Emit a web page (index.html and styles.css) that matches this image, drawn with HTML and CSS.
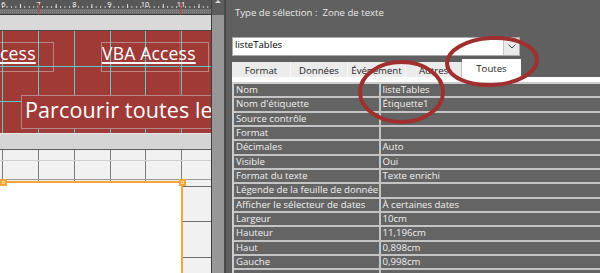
FILE: index.html
```html
<!DOCTYPE html>
<html lang="fr">
<head>
<meta charset="utf-8">
<title>Feuille de propriétés</title>
<link rel="stylesheet" href="styles.css">
</head>
<body>
<div class="screen">
  <div class="designer">
    <svg class="ruler" width="211" height="15" viewBox="0 0 211 15">
      <defs>
        <pattern id="rdots" width="2" height="2" patternUnits="userSpaceOnUse"><rect width="2" height="2" fill="#6f6f6f"/><rect width="1" height="1" fill="#8c8c8c"/></pattern>
        <pattern id="rtick" x="2" width="4.4625" height="15" patternUnits="userSpaceOnUse"><rect x="0" y="6" width="1" height="2" fill="#c8c8c8"/></pattern>
        <pattern id="rhalf" x="20" width="35.7" height="15" patternUnits="userSpaceOnUse"><rect x="0" y="4" width="1" height="4" fill="#e0e0e0"/></pattern>
      </defs>
      <rect width="211" height="9" fill="#575757"/>
      <rect y="9" width="211" height="5" fill="url(#rdots)"/>
      <rect y="14" width="211" height="1" fill="#3a3a3a"/>
      <rect width="211" height="9" fill="url(#rtick)"/>
      <rect width="211" height="9" fill="url(#rhalf)"/>
      <g class="rnum" fill="#ffffff" font-size="7.5" text-anchor="middle">
        <text x="3.5" y="7">6</text>
        <text x="38.5" y="7">7</text>
        <text x="74.5" y="7">8</text>
        <text x="109.5" y="7">9</text>
        <text x="145" y="7">10</text>
        <text x="181" y="7">11</text>
      </g>
      <rect x="38" y="3" width="1" height="12" fill="#d23c3c"/>
      <rect x="180" y="3" width="1" height="12" fill="#d23c3c"/>
    </svg>
    <div class="bar bar-top"></div>
    <div class="section-head">
      <div class="lbl lbl-access"><span class="u">cess</span></div>
      <div class="lbl lbl-vba"><span class="u">VBA Access</span></div>
      <div class="lbl lbl-parcourir">Parcourir toutes le</div>
    </div>
    <div class="bar bar-detail"></div>
    <div class="section-detail">
      <div class="listbox">
        <span class="handle h-left"></span>
        <span class="handle h-right"></span>
      </div>
    </div>
  </div>
  <div class="vscroll"><span class="vs-top"><span class="vs-arrow"></span></span></div>
  <div class="props">
    <div class="sel-type">Type de sélection :&nbsp; Zone de texte</div>
    <div class="combo">
      <span class="combo-text">listeTables</span>
      <span class="combo-btn"><svg width="8" height="5" viewBox="0 0 8 5"><path d="M0.5 0.5 L4 4 L7.5 0.5" fill="none" stroke="#444" stroke-width="1"/></svg></span>
    </div>
    <div class="tabs">
      <span class="tab t-format">Format</span>
      <span class="tab t-donnees">Données</span>
      <span class="tab t-evt">Événement</span>
      <span class="tab t-autres">Autres</span>
      <span class="tab tab-active">Toutes</span>
    </div>
    <div class="tab-band"></div>
    <div class="ptable">
      <div class="row"><div class="k">Nom</div><div class="v">listeTables</div></div>
      <div class="row"><div class="k">Nom d'étiquette</div><div class="v">Étiquette1</div></div>
      <div class="row"><div class="k">Source contrôle</div><div class="v"></div></div>
      <div class="row"><div class="k">Format</div><div class="v"></div></div>
      <div class="row"><div class="k">Décimales</div><div class="v">Auto</div></div>
      <div class="row"><div class="k">Visible</div><div class="v">Oui</div></div>
      <div class="row"><div class="k">Format du texte</div><div class="v">Texte enrichi</div></div>
      <div class="row"><div class="k">Légende de la feuille de donnée</div><div class="v"></div></div>
      <div class="row"><div class="k">Afficher le sélecteur de dates</div><div class="v">À certaines dates</div></div>
      <div class="row"><div class="k">Largeur</div><div class="v">10cm</div></div>
      <div class="row"><div class="k">Hauteur</div><div class="v">11,196cm</div></div>
      <div class="row"><div class="k">Haut</div><div class="v">0,898cm</div></div>
      <div class="row"><div class="k">Gauche</div><div class="v">0,998cm</div></div>
      <div class="row"><div class="k"></div><div class="v"></div></div>
    </div>
  </div>
</div>
<svg class="annot" width="600" height="273" viewBox="0 0 600 273">
  <ellipse cx="401.5" cy="92" rx="41.5" ry="30" fill="none" stroke="#a02f2f" stroke-width="4"/>
  <ellipse cx="492" cy="61.5" rx="45" ry="23.5" fill="none" stroke="#a02f2f" stroke-width="4" transform="rotate(-3 492 61.5)"/>
</svg>
</body>
</html>
```
FILE: styles.css
```css
* { box-sizing: border-box; }
html, body { margin: 0; padding: 0; }
body {
  width: 600px;
  height: 273px;
  overflow: hidden;
  position: relative;
  background: #606060;
  font-family: "Open Sans", "DejaVu Sans", sans-serif;
}
.screen { display: flex; width: 600px; height: 273px; }

/* ---------- form designer ---------- */
.designer {
  width: 212px;
  flex: none;
  display: flex;
  flex-direction: column;
  overflow: hidden;
  border-right: 1px solid #3e3e3e;
}
.ruler { display: block; flex: none; }
.rnum { font-family: "Open Sans", sans-serif; }
.bar { flex: none; }
.bar-top { height: 16px; background: #d9d9d9; border-bottom: 1px solid #4a4a4a; }
.bar-detail { height: 17px; background: #d5d5d5; border-top: 1px solid #e8e8e8; border-bottom: 1px solid #5e5e5e; }

.section-head {
  flex: none;
  height: 102px;
  position: relative;
  background-color: #a03a37;
  background-image:
    linear-gradient(90deg, transparent 179px, #d8403c 179px 180px, transparent 180px),
    linear-gradient(90deg, transparent 2px, #5cc9c9 2px 3px, transparent 3px),
    linear-gradient(90deg, transparent 38px, #5cc9c9 38px 39px, transparent 39px),
    linear-gradient(90deg, transparent 74px, #5cc9c9 74px 75px, transparent 75px),
    linear-gradient(90deg, transparent 110px, #5cc9c9 110px 111px, transparent 111px),
    linear-gradient(90deg, transparent 145px, #5cc9c9 145px 146px, transparent 146px),
    linear-gradient(90deg, transparent 181px, #5cc9c9 181px 182px, transparent 182px),
    linear-gradient(180deg, transparent 35px, #5cc9c9 35px 36px, transparent 36px),
    linear-gradient(180deg, transparent 70px, #5cc9c9 70px 71px, transparent 71px);
}
.lbl {
  position: absolute;
  color: #ffffff;
  white-space: nowrap;
  border: 1px solid rgba(196, 186, 186, 0.6);
  overflow: hidden;
}
.u {
  text-decoration: underline;
  text-decoration-thickness: 1.5px;
  text-underline-offset: 2px;
}
.lbl-access {
  left: -1px; top: 11px; width: 55px; height: 30px;
  font-size: 17.5px; line-height: 20px; padding-left: 0;
  letter-spacing: 0.2px;
}
.lbl-vba {
  left: 101px; top: 11px; width: 108px; height: 30px;
  font-size: 17.5px; line-height: 20px; padding-left: 0;
  letter-spacing: 0.2px;
}
.lbl-parcourir {
  left: 21px; top: 64px; width: 220px; height: 34px;
  background: #a03a37;
  font-size: 21.5px; line-height: 27px; padding-left: 3px;
  letter-spacing: 0.12px;
}

.section-detail {
  flex: 1;
  position: relative;
  background-color: #f1f1f1;
  background-image:
    linear-gradient(180deg, transparent 10px, #cfcfcf 10px 11px, transparent 11px),
    linear-gradient(180deg, transparent 29px, #9a9a9a 29px 30px, transparent 30px),
    linear-gradient(180deg, transparent 36px, #6e6e6e 36px 37px, transparent 37px),
    linear-gradient(180deg, transparent 71px, #6e6e6e 71px 72px, transparent 72px),
    linear-gradient(180deg, transparent 107px, #6e6e6e 107px 108px, transparent 108px),
    linear-gradient(90deg, transparent 2px, #7c7c7c 2px 3px, transparent 3px),
    linear-gradient(90deg, transparent 38px, #7c7c7c 38px 39px, transparent 39px),
    linear-gradient(90deg, transparent 74px, #7c7c7c 74px 75px, transparent 75px),
    linear-gradient(90deg, transparent 110px, #7c7c7c 110px 111px, transparent 111px),
    linear-gradient(90deg, transparent 145px, #7c7c7c 145px 146px, transparent 146px),
    linear-gradient(90deg, transparent 181px, #7c7c7c 181px 182px, transparent 182px);
}
.listbox {
  position: absolute;
  left: -4px; top: 31px;
  width: 187px; height: 120px;
  background: #ffffff;
  border: 2px solid #f6a53b;
}
.handle {
  position: absolute;
  width: 7px; height: 7px;
  background: #f6a53b;
  border: 2px solid #f6a53b;
  box-shadow: inset 0 0 0 1px #fbd39c;
}
.h-left { left: 2px; top: -4px; }
.h-right { right: -5px; top: -4px; }

/* ---------- vertical scrollbar ---------- */
.vscroll {
  width: 14px;
  flex: none;
  background: #979797;
  border-right: 2px solid #4a4a4a;
  display: flex;
  flex-direction: column;
}
.vs-top {
  height: 15px;
  background: #5d5d5d;
  display: flex;
  justify-content: center;
}
.vs-arrow {
  width: 0; height: 0;
  border-left: 3px solid transparent;
  border-right: 3px solid transparent;
  border-bottom: 3px solid #d8d8d8;
}

/* ---------- property sheet ---------- */
.props {
  flex: 1;
  padding-left: 6px;
  font-size: 9.6px;
  color: #f0f0f0;
  display: flex;
  flex-direction: column;
  overflow: hidden;
}
.sel-type {
  margin-top: 7px;
  line-height: 12px;
  padding-left: 3px;
  color: #e8e8e8;
  white-space: nowrap;
}
.combo {
  margin-top: 18px;
  width: 288px;
  height: 19px;
  background: #ffffff;
  border: 1px solid #a9a9a9;
  display: flex;
  flex: none;
}
.combo-text {
  color: #000;
  padding-left: 2px;
  line-height: 14.5px;
}
.combo-btn {
  margin-left: auto;
  width: 16px;
  background: #e9e9e9;
  border-left: 1px solid #c4c4c4;
  display: flex;
  align-items: center;
  justify-content: center;
}
.combo-btn svg { display: block; }
.tabs {
  margin-top: 3px;
  height: 18px;
  display: flex;
  align-items: flex-end;
  flex: none;
}
.tab {
  height: 15px;
  line-height: 17px;
  background: #ebebeb;
  color: #1e1e1e;
  text-align: center;
  border-right: 1px solid #f8f8f8;
  white-space: nowrap;
  overflow: hidden;
}
.t-format { width: 59px; }
.t-donnees { width: 57px; }
.t-evt { width: 58px; }
.t-autres { width: 56px; border-right: 1px solid #bdbdbd; }
.tab-active {
  width: 59px;
  height: 18px;
  line-height: 20px;
  background: #ffffff;
  border-right: none;
}
.tab-band { height: 5px; background: #ffffff; flex: none; }
.ptable {
  border-top: 2px solid #cdcdcd;
  border-left: 2px solid #cdcdcd;
}
.row {
  display: grid;
  grid-template-columns: 147px 1fr;
  height: 14.333px;
  border-bottom: 2px solid #c4c4c4;
  background: #646464;
  line-height: 12.33px;
  white-space: nowrap;
}
.k { border-right: 2px solid #c4c4c4; padding-left: 2px; overflow: hidden; }
.v { padding-left: 1.5px; overflow: hidden; }

/* ---------- annotations drawn over the screenshot ---------- */
.annot { position: absolute; left: 0; top: 0; pointer-events: none; }
```
